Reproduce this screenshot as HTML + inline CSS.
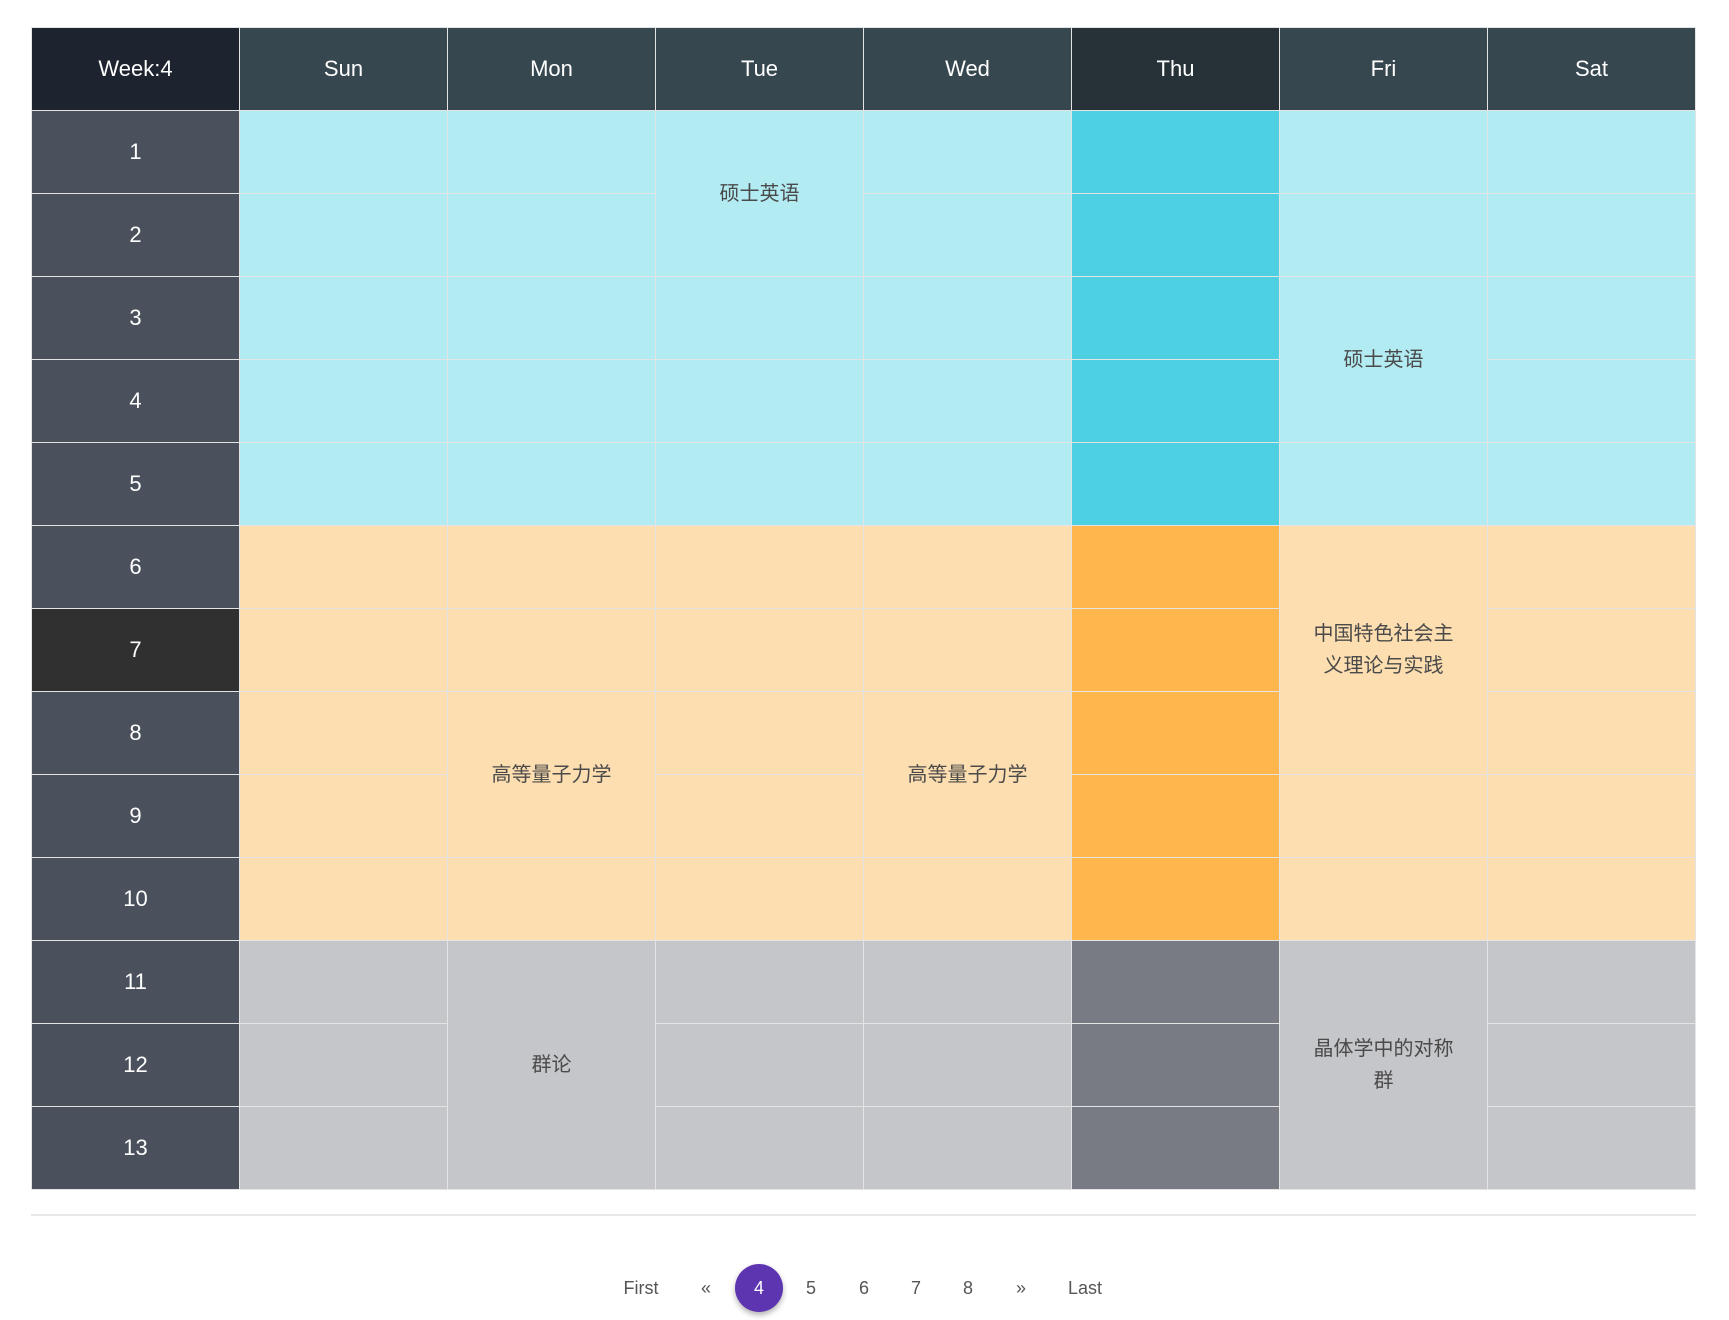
<!DOCTYPE html>
<html><head><meta charset="utf-8"><style>
*{margin:0;padding:0;box-sizing:border-box}
body{width:1729px;height:1320px;background:#fff;position:relative;overflow:hidden;font-family:"Liberation Sans",sans-serif}
.g{position:absolute;left:31px;top:27px;width:1665px;display:grid;grid-template-columns:repeat(8,1fr);grid-template-rows:82px repeat(13,82px);gap:1px;background:#e4e4e4;border:1px solid #e4e4e4}
.g>div{display:flex;align-items:center;justify-content:center;text-align:center}
.h{background:#37474f;color:#fff;font-size:22px}
.w{background:#1e2330}.t{background:#263238}
.n{background:#4a505c;color:#fff;font-size:22px;font-weight:500}
.c{background:#b2ebf2}.o{background:#fddeb0}.y{background:#c5c6ca}
.C{background:#4dd0e1}.O{background:#ffb74d}.Y{background:#787b84}
.x{font-family:"Liberation Sans","WenQuanYi Zen Hei","Noto Sans CJK SC",sans-serif;font-size:20px;color:#4a4a4a;line-height:32px}
.hr{position:absolute;left:31px;width:1665px;top:1214px;height:2px;background:#e8e8e8}
.p{position:absolute;top:1276px;font-size:18px;color:#555;transform:translateX(-50%);line-height:24px}
.a{position:absolute;left:735px;top:1264px;width:48px;height:48px;border-radius:50%;background:#5e35b1;color:#fff;font-size:18px;display:flex;align-items:center;justify-content:center;box-shadow:0 3px 6px rgba(0,0,0,.3)}
</style></head><body>
<div class="g">
<div class="h w" style="grid-area:1/1">Week:4</div>
<div class="h" style="grid-area:1/2">Sun</div>
<div class="h" style="grid-area:1/3">Mon</div>
<div class="h" style="grid-area:1/4">Tue</div>
<div class="h" style="grid-area:1/5">Wed</div>
<div class="h t" style="grid-area:1/6">Thu</div>
<div class="h" style="grid-area:1/7">Fri</div>
<div class="h" style="grid-area:1/8">Sat</div>

<div class="n" style="grid-area:2/1">1</div><div class="n" style="grid-area:3/1">2</div><div class="n" style="grid-area:4/1">3</div><div class="n" style="grid-area:5/1">4</div><div class="n" style="grid-area:6/1">5</div><div class="n" style="grid-area:7/1">6</div><div class="n" style="grid-area:8/1;background:#303030">7</div><div class="n" style="grid-area:9/1">8</div><div class="n" style="grid-area:10/1">9</div><div class="n" style="grid-area:11/1">10</div><div class="n" style="grid-area:12/1">11</div><div class="n" style="grid-area:13/1">12</div><div class="n" style="grid-area:14/1">13</div>

<div class="c" style="grid-area:2/2"></div><div class="c" style="grid-area:3/2"></div><div class="c" style="grid-area:4/2"></div><div class="c" style="grid-area:5/2"></div><div class="c" style="grid-area:6/2"></div><div class="o" style="grid-area:7/2"></div><div class="o" style="grid-area:8/2"></div><div class="o" style="grid-area:9/2"></div><div class="o" style="grid-area:10/2"></div><div class="o" style="grid-area:11/2"></div><div class="y" style="grid-area:12/2"></div><div class="y" style="grid-area:13/2"></div><div class="y" style="grid-area:14/2"></div>

<div class="c" style="grid-area:2/3"></div><div class="c" style="grid-area:3/3"></div><div class="c" style="grid-area:4/3"></div><div class="c" style="grid-area:5/3"></div><div class="c" style="grid-area:6/3"></div><div class="o" style="grid-area:7/3"></div><div class="o" style="grid-area:8/3"></div><div class="o x" style="grid-area:9/3/11/4">高等量子力学</div><div class="o" style="grid-area:11/3"></div><div class="y x" style="grid-area:12/3/15/4">群论</div>

<div class="c x" style="grid-area:2/4/4/5">硕士英语</div><div class="c" style="grid-area:4/4"></div><div class="c" style="grid-area:5/4"></div><div class="c" style="grid-area:6/4"></div><div class="o" style="grid-area:7/4"></div><div class="o" style="grid-area:8/4"></div><div class="o" style="grid-area:9/4"></div><div class="o" style="grid-area:10/4"></div><div class="o" style="grid-area:11/4"></div><div class="y" style="grid-area:12/4"></div><div class="y" style="grid-area:13/4"></div><div class="y" style="grid-area:14/4"></div>

<div class="c" style="grid-area:2/5"></div><div class="c" style="grid-area:3/5"></div><div class="c" style="grid-area:4/5"></div><div class="c" style="grid-area:5/5"></div><div class="c" style="grid-area:6/5"></div><div class="o" style="grid-area:7/5"></div><div class="o" style="grid-area:8/5"></div><div class="o x" style="grid-area:9/5/11/6">高等量子力学</div><div class="o" style="grid-area:11/5"></div><div class="y" style="grid-area:12/5"></div><div class="y" style="grid-area:13/5"></div><div class="y" style="grid-area:14/5"></div>

<div class="C" style="grid-area:2/6"></div><div class="C" style="grid-area:3/6"></div><div class="C" style="grid-area:4/6"></div><div class="C" style="grid-area:5/6"></div><div class="C" style="grid-area:6/6"></div><div class="O" style="grid-area:7/6"></div><div class="O" style="grid-area:8/6"></div><div class="O" style="grid-area:9/6"></div><div class="O" style="grid-area:10/6"></div><div class="O" style="grid-area:11/6"></div><div class="Y" style="grid-area:12/6"></div><div class="Y" style="grid-area:13/6"></div><div class="Y" style="grid-area:14/6"></div>

<div class="c" style="grid-area:2/7"></div><div class="c" style="grid-area:3/7"></div><div class="c x" style="grid-area:4/7/6/8">硕士英语</div><div class="c" style="grid-area:6/7"></div><div class="o x" style="grid-area:7/7/10/8">中国特色社会主<br>义理论与实践</div><div class="o" style="grid-area:10/7"></div><div class="o" style="grid-area:11/7"></div><div class="y x" style="grid-area:12/7/15/8">晶体学中的对称<br>群</div>

<div class="c" style="grid-area:2/8"></div><div class="c" style="grid-area:3/8"></div><div class="c" style="grid-area:4/8"></div><div class="c" style="grid-area:5/8"></div><div class="c" style="grid-area:6/8"></div><div class="o" style="grid-area:7/8"></div><div class="o" style="grid-area:8/8"></div><div class="o" style="grid-area:9/8"></div><div class="o" style="grid-area:10/8"></div><div class="o" style="grid-area:11/8"></div><div class="y" style="grid-area:12/8"></div><div class="y" style="grid-area:13/8"></div><div class="y" style="grid-area:14/8"></div>
</div>
<div class="hr"></div>
<div class="p" style="left:641px">First</div>
<div class="p" style="left:706px">«</div>
<div class="a">4</div>
<div class="p" style="left:811px">5</div>
<div class="p" style="left:864px">6</div>
<div class="p" style="left:916px">7</div>
<div class="p" style="left:968px">8</div>
<div class="p" style="left:1021px">»</div>
<div class="p" style="left:1085px">Last</div>
</body></html>
